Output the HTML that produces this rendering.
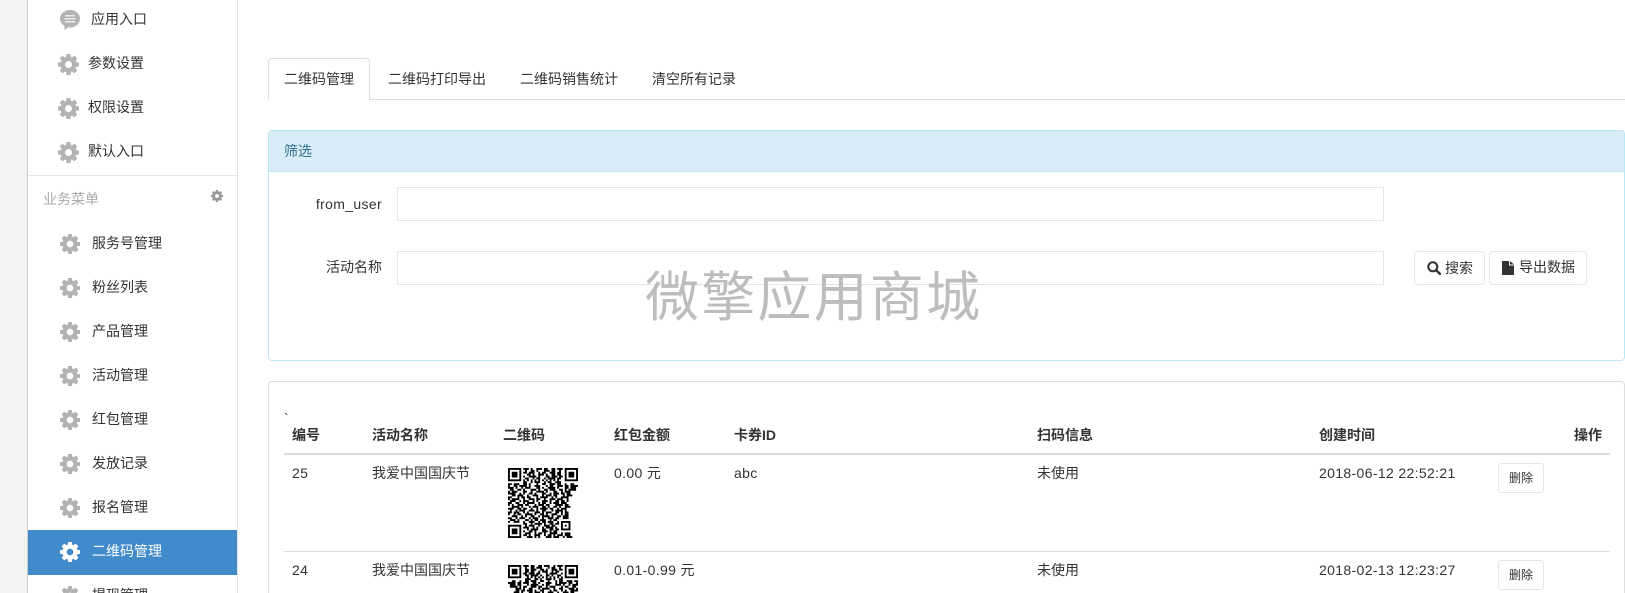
<!DOCTYPE html>
<html lang="zh"><head><meta charset="utf-8"><title>二维码管理</title>
<style>
html,body{margin:0;padding:0;width:1625px;height:593px;overflow:hidden;background:#fff}
body{font:14px/20px "Liberation Sans","Noto Sans CJK SC",sans-serif;color:#333}
#w{position:relative;width:1625px;height:593px;overflow:hidden;background:#fff}
.a{position:absolute;box-sizing:border-box}
.t{position:absolute;white-space:nowrap;line-height:20px}
.b{font-weight:bold}
.n{letter-spacing:.35px}
.btn{position:absolute;box-sizing:border-box;border:1px solid #e5e5e5;border-radius:4px;background:#fff}
.inp{position:absolute;box-sizing:border-box;border:1px solid #e5e5e5;left:397px;width:987px;background:#fff}
svg{position:absolute;display:block}
</style></head><body><div id="w">
<svg width="0" height="0" style="position:absolute"><defs>
<symbol id="g" viewBox="128 128 1536 1536"><path d="M1152 896q0-106-75-181t-181-75-181 75-75 181 75 181 181 75 181-75 75-181zm512-109v222q0 12-8 23t-20 13l-185 28q-19 54-39 91 35 50 107 138 10 12 10 25t-9 23q-27 37-99 108t-94 71q-12 0-26-9l-138-108q-44 23-91 38-16 136-29 186-7 28-36 28h-222q-14 0-24.5-8.5t-11.5-21.5l-28-184q-49-16-90-37l-141 107q-10 9-25 9-14 0-25-11-126-114-165-168-7-10-7-23 0-12 8-23 15-21 51-66.5t54-70.5q-27-50-41-99l-183-27q-13-2-21-12.5t-8-23.5v-222q0-12 8-23t19-13l186-28q14-46 39-92-40-57-107-138-10-12-10-24 0-10 9-23 26-36 98.5-107.5t94.5-71.5q13 0 26 10l138 107q44-23 91-38 16-136 29-186 7-28 36-28h222q14 0 24.5 8.5t11.5 21.5l28 184q49 16 90 37l142-107q9-9 24-9 13 0 25 10 129 119 165 170 7 8 7 22 0 12-8 23-15 21-51 66.5t-54 70.5q26 50 41 98l183 28q13 2 21 12.5t8 23.5z"/></symbol>
<g id="fin"><path fill="#fff" d="M0 0h8v8h-8zM29 0h8v8h-8zM0 29h8v8h-8zM27 27h7v7h-7z"/><path fill-rule="evenodd" d="M0 0h7v7h-7zM1 1v5h5v-5zM2 2h3v3h-3zM30 0h7v7h-7zM31 1v5h5v-5zM32 2h3v3h-3zM0 30h7v7h-7zM1 31v5h5v-5zM2 32h3v3h-3zM28 28h5v5h-5zM29 29v3h3v-3zM30 30h1v1h-1z"/></g>
<path id="qd" fill="none" stroke="#000" d="M8 .5h3m1 0h1m2 0h3m1 0h2m2 0h2m1 0h3M9 1.5h1m2 0h2m1 0h1m3 0h3m1 0h2m2 0h1M8 2.5h2m1 0h3m2 0h1m1 0h2m2 0h3m1 0h2M10 3.5h2m1 0h1m2 0h3m1 0h1m2 0h2m1 0h2M8 4.5h1m2 0h4m1 0h1m3 0h2m1 0h3m1 0h2M9 5.500h2m2 0h1m1 0h2m2 0h1m1 0h4m1 0h2M8 6.5h1m1 0h1m1 0h1m1 0h1m1 0h1m1 0h1m1 0h1m1 0h1m1 0h1m1 0h1M8 7.5h2m2 0h1m1 0h3m2 0h1m1 0h2m2 0h3M0 8.5h2m1 0h3m2 0h2m1 0h1m3 0h1m2 0h2m2 0h3m1 0h2m2 0h1m2 0h2M0 9.5h1m2 0h2m1 0h4m1 0h1m2 0h3m3 0h1m1 0h2m2 0h3m1 0h2m1 0h4M0 10.5h3m1 0h1m2 0h1m1 0h3m3 0h2m1 0h1m2 0h4m1 0h1m3 0h2m1 0h3M1 11.5h2m2 0h2m1 0h1m3 0h3m1 0h1m2 0h2m1 0h3m2 0h2m1 0h1m1 0h4M0 12.5h1m1 0h3m3 0h2m2 0h1m2 0h4m1 0h1m3 0h2m2 0h1m1 0h3M0 13.5h4m2 0h1m1 0h1m2 0h2m1 0h1m3 0h2m2 0h1m1 0h3m1 0h2m1 0h2M2 14.5h2m1 0h3m2 0h1m2 0h3m2 0h1m1 0h3m1 0h2m3 0h1m1 0h3M0 15.5h2m3 0h1m1 0h2m1 0h2m3 0h1m1 0h4m2 0h1m1 0h1m2 0h4M0 16.5h1m1 0h4m2 0h1m2 0h3m1 0h2m2 0h1m2 0h3m1 0h3m2 0h1M1 17.5h3m2 0h1m1 0h3m2 0h1m1 0h1m2 0h3m1 0h1m2 0h2m1 0h2m1 0h1M0 18.5h2m2 0h2m2 0h1m1 0h4m2 0h1m1 0h2m2 0h1m1 0h3m1 0h3M0 19.5h1m1 0h1m2 0h3m1 0h2m3 0h1m1 0h3m1 0h2m3 0h4m1 0h2M2 20.5h4m1 0h1m3 0h1m1 0h3m2 0h2m1 0h1m2 0h2m1 0h1m2 0h3M0 21.5h3m2 0h2m1 0h2m2 0h1m2 0h1m1 0h4m1 0h2m2 0h1m1 0h3M1 22.5h1m2 0h1m1 0h3m2 0h3m1 0h1m2 0h2m3 0h1m1 0h4m1 0h1M0 23.5h2m1 0h3m2 0h1m1 0h1m3 0h3m1 0h1m1 0h3m2 0h2m1 0h1m1 0h2M0 24.5h1m2 0h1m1 0h2m2 0h4m1 0h1m2 0h2m1 0h1m2 0h3m2 0h1m1 0h2M2 25.5h3m2 0h1m1 0h1m2 0h2m2 0h1m1 0h4m1 0h1m2 0h2m1 0h3M0 26.5h2m2 0h1m1 0h3m2 0h1m1 0h3m2 0h1m2 0h3m1 0h2m2 0h3M1 27.5h3m1 0h1m3 0h2m1 0h1m1 0h2m1 0h3m2 0h1m1 0h2m1 0h4M0 28.5h1m2 0h3m2 0h1m2 0h3m2 0h1m1 0h2m1 0h3m2 0h1m2 0h3M8 29.5h2m2 0h1m1 0h4m1 0h1m2 0h2m1 0h3m2 0h3M9 30.5h1m1 0h3m2 0h1m2 0h3m1 0h2m2 0h1m2 0h3M8 31.5h3m2 0h1m1 0h1m2 0h1m1 0h4m1 0h1m2 0h2m1 0h2M10 32.5h1m1 0h4m2 0h2m2 0h2m1 0h2m1 0h1m2 0h3M8 33.5h1m2 0h2m1 0h1m3 0h3m1 0h1m1 0h2m1 0h3m1 0h2M9 34.5h3m2 0h1m1 0h2m1 0h1m2 0h4m2 0h1m1 0h3M8 35.5h2m1 0h1m2 0h3m2 0h1m1 0h2m1 0h1m1 0h3m1 0h3M10 36.5h3m1 0h1m1 0h1m3 0h3m1 0h3m2 0h1m1 0h3"/>
</defs></svg>

<!-- sidebar -->
<div class="a" style="left:0;top:0;width:27px;height:593px;background:#f3f3f3"></div>
<div class="a" style="left:27px;top:0;width:1px;height:593px;background:#ccc"></div>
<div class="a" style="left:237px;top:0;width:1px;height:593px;background:#e3e3e3"></div>
<div class="a" style="left:28px;top:175px;width:209px;height:1px;background:#e5e5e5"></div>
<div class="a" style="left:28px;top:530px;width:209px;height:45px;background:#428bca"></div>

<svg style="left:60px;top:10px" width="20" height="20" viewBox="0 0 20 20"><path fill="#b3b3b3" d="M10 0c5.500 0 10 3.700 10 8.800s-4.500 8.800-10 8.800c-.8 0-1.500-.1-2.200-.2L4.400 20l.2-4C2 14.500 0 12 0 8.800 0 3.700 4.500 0 10 0z"/><path stroke="#fff" stroke-width="1.200" d="M5 5.800h10M4.500 8.800h11M5 11.800h10"/></svg>
<svg style="left:58px;top:54px" width="21" height="21" fill="#b3b3b3"><use href="#g"/></svg>
<svg style="left:58px;top:98px" width="21" height="21" fill="#b3b3b3"><use href="#g"/></svg>
<svg style="left:58px;top:142px" width="21" height="21" fill="#b3b3b3"><use href="#g"/></svg>
<svg style="left:211px;top:190px" width="12" height="12" fill="#999"><use href="#g"/></svg>
<svg style="left:60px;top:234px" width="20" height="20" fill="#b3b3b3"><use href="#g"/></svg>
<svg style="left:60px;top:278px" width="20" height="20" fill="#b3b3b3"><use href="#g"/></svg>
<svg style="left:60px;top:322px" width="20" height="20" fill="#b3b3b3"><use href="#g"/></svg>
<svg style="left:60px;top:366px" width="20" height="20" fill="#b3b3b3"><use href="#g"/></svg>
<svg style="left:60px;top:410px" width="20" height="20" fill="#b3b3b3"><use href="#g"/></svg>
<svg style="left:60px;top:454px" width="20" height="20" fill="#b3b3b3"><use href="#g"/></svg>
<svg style="left:60px;top:498px" width="20" height="20" fill="#b3b3b3"><use href="#g"/></svg>
<svg style="left:60px;top:542px" width="20" height="20" fill="#fff"><use href="#g"/></svg>
<svg style="left:60px;top:586px" width="20" height="20" fill="#b3b3b3"><use href="#g"/></svg>

<div class="t" style="left:91px;top:9px">应用入口</div>
<div class="t" style="left:88px;top:53px">参数设置</div>
<div class="t" style="left:88px;top:97px">权限设置</div>
<div class="t" style="left:88px;top:141px">默认入口</div>
<div class="t" style="left:43px;top:189px;color:#aaa">业务菜单</div>
<div class="t" style="left:92px;top:233px">服务号管理</div>
<div class="t" style="left:92px;top:277px">粉丝列表</div>
<div class="t" style="left:92px;top:321px">产品管理</div>
<div class="t" style="left:92px;top:365px">活动管理</div>
<div class="t" style="left:92px;top:409px">红包管理</div>
<div class="t" style="left:92px;top:453px">发放记录</div>
<div class="t" style="left:92px;top:497px">报名管理</div>
<div class="t" style="left:92px;top:541px;color:#fff">二维码管理</div>
<div class="t" style="left:92px;top:585px">提现管理</div>

<!-- tabs -->
<div class="a" style="left:268px;top:99px;width:1357px;height:1px;background:#ddd"></div>
<div class="a" style="left:268px;top:58px;width:102px;height:42px;background:#fff;border:1px solid #ddd;border-bottom:none;border-radius:4px 4px 0 0"></div>
<div class="t" style="left:284px;top:69px">二维码管理</div>
<div class="t" style="left:388px;top:69px">二维码打印导出</div>
<div class="t" style="left:520px;top:69px">二维码销售统计</div>
<div class="t" style="left:652px;top:69px">清空所有记录</div>

<!-- filter panel -->
<div class="a" style="left:268px;top:130px;width:1357px;height:231px;border:1px solid #bce8f1;border-radius:4px;background:#fff;overflow:hidden">
  <div class="a" style="left:0;top:0;width:100%;height:41px;background:#d9edf7;border-bottom:1px solid #bce8f1"></div>
</div>
<div class="t" style="left:284px;top:141px;color:#31708f">筛选</div>
<div class="t n" style="right:1243px;top:194px">from_user</div>
<div class="inp" style="top:187px;height:34px"></div>
<div class="t" style="right:1243px;top:257px">活动名称</div>
<div class="inp" style="top:251px;height:34px"></div>
<div class="btn" style="left:1414px;top:251px;width:71px;height:34px"></div>
<svg style="left:1427px;top:261px" width="14" height="14" viewBox="0 0 14 14"><circle cx="5.800" cy="5.800" r="4.500" fill="none" stroke="#333" stroke-width="2"/><path d="M9 9l4 4" stroke="#333" stroke-width="2.400" stroke-linecap="round"/></svg>
<div class="t" style="left:1445px;top:258px">搜索</div>
<div class="btn" style="left:1489px;top:251px;width:98px;height:34px"></div>
<svg style="left:1502px;top:261px" width="12" height="14" viewBox="0 0 12 14"><path fill="#333" d="M0 0h7v4.500h5V14H0zM8 0l4 3.500H8z"/></svg>
<div class="t" style="left:1519px;top:257px">导出数据</div>

<!-- table panel -->
<div class="a" style="left:268px;top:381px;width:1357px;height:212px;border:1px solid #ddd;border-bottom:none;border-radius:4px 4px 0 0;background:#fff"></div>
<div class="t" style="left:284px;top:408px">`</div>
<div class="t b" style="left:292px;top:425px">编号</div>
<div class="t b" style="left:372px;top:425px">活动名称</div>
<div class="t b" style="left:503px;top:425px">二维码</div>
<div class="t b" style="left:614px;top:425px">红包金额</div>
<div class="t b" style="left:734px;top:425px">卡券ID</div>
<div class="t b" style="left:1037px;top:425px">扫码信息</div>
<div class="t b" style="left:1319px;top:425px">创建时间</div>
<div class="t b" style="left:1574px;top:425px">操作</div>
<div class="a" style="left:284px;top:453px;width:1326px;height:2px;background:#ddd"></div>
<div class="a" style="left:284px;top:551px;width:1326px;height:1px;background:#ddd"></div>

<div class="t n" style="left:292px;top:463px">25</div>
<div class="t" style="left:372px;top:463px">我爱中国国庆节</div>
<svg style="left:508px;top:468px;overflow:hidden" width="70" height="70" viewBox="0 0 37 37"><use href="#qd"/><use href="#fin"/></svg>
<div class="t n" style="left:614px;top:463px">0.00 元</div>
<div class="t n" style="left:734px;top:463px">abc</div>
<div class="t" style="left:1037px;top:463px">未使用</div>
<div class="t n" style="left:1319px;top:463px">2018-06-12 22:52:21</div>
<div class="btn" style="left:1498px;top:463px;width:46px;height:30px;border-radius:3px"></div>
<div class="t" style="left:1509px;top:468px;font-size:12px">删除</div>

<div class="t n" style="left:292px;top:560px">24</div>
<div class="t" style="left:372px;top:560px">我爱中国国庆节</div>
<svg style="left:508px;top:565px;overflow:hidden" width="70" height="28" viewBox="0 0 37 14.800"><use href="#qd" transform="translate(37 0) scale(-1 1)"/><use href="#fin"/></svg>
<div class="t n" style="left:614px;top:560px">0.01-0.99 元</div>
<div class="t" style="left:1037px;top:560px">未使用</div>
<div class="t n" style="left:1319px;top:560px">2018-02-13 12:23:27</div>
<div class="btn" style="left:1498px;top:560px;width:46px;height:30px;border-radius:3px"></div>
<div class="t" style="left:1509px;top:565px;font-size:12px">删除</div>

<!-- watermark -->
<div class="t" style="left:645px;top:268px;line-height:60px;font-size:54px;letter-spacing:2.200px;font-weight:400;color:#bdbdbd">微擎应用商城</div>
</div></body></html>
